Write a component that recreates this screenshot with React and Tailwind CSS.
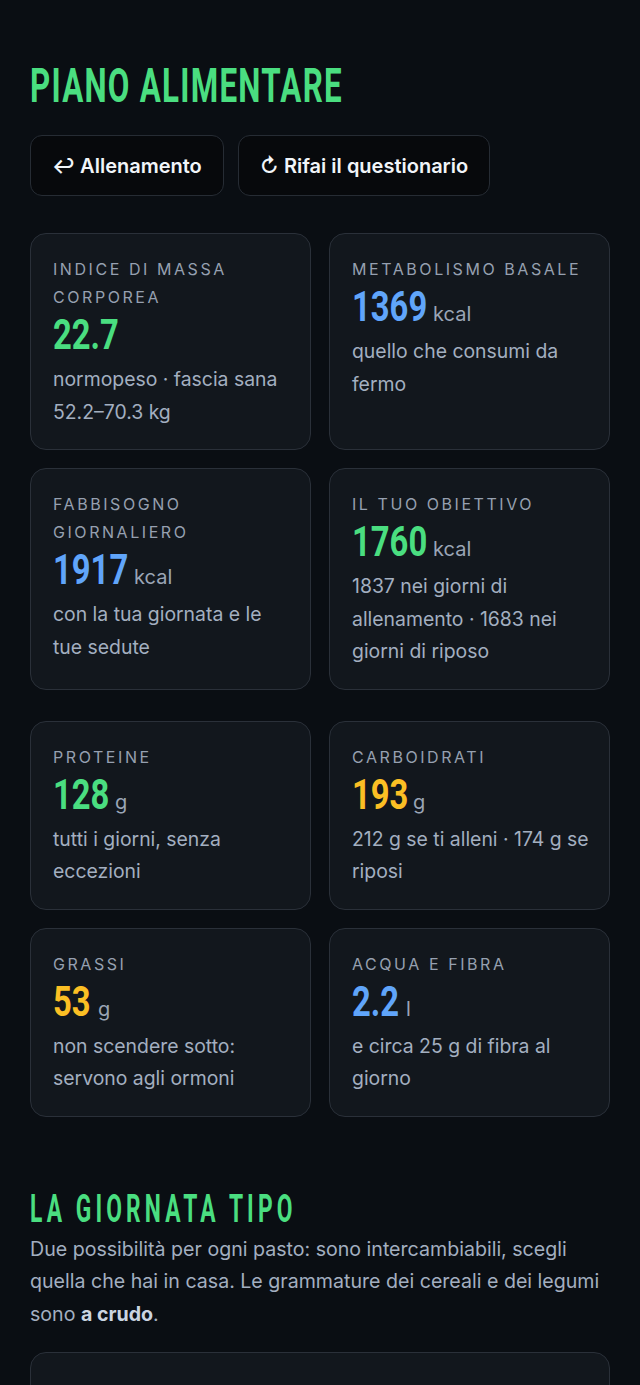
import React from "react";

// condensed display face: Roboto squeezed horizontally
const display = { fontFamily: '"Roboto", "Liberation Sans", sans-serif' };

const stats1 = [
  { label: "Indice di massa corporea", value: "22.7", unit: "", w: "w-[70px]", color: "text-[#4ade80]", desc: "normopeso · fascia sana 52.2–70.3 kg" },
  { label: "Metabolismo basale", value: "1369", unit: "kcal", w: "w-[81px]", color: "text-[#60a5fa]", desc: "quello che consumi da fermo" },
  { label: "Fabbisogno giornaliero", value: "1917", unit: "kcal", w: "w-[81px]", color: "text-[#60a5fa]", desc: "con la tua giornata e le tue sedute" },
  { label: "Il tuo obiettivo", value: "1760", unit: "kcal", w: "w-[81px]", color: "text-[#4ade80]", desc: "1837 nei giorni di allenamento · 1683 nei giorni di riposo" },
];

const stats2 = [
  { label: "Proteine", value: "128", unit: "g", w: "w-[62px]", color: "text-[#4ade80]", desc: "tutti i giorni, senza eccezioni" },
  { label: "Carboidrati", value: "193", unit: "g", w: "w-[61px]", color: "text-[#fbbf24]", desc: "212 g se ti alleni · 174 g se riposi" },
  { label: "Grassi", value: "53", unit: "g", w: "w-[45px]", color: "text-[#fbbf24]", desc: "non scendere sotto: servono agli ormoni" },
  { label: "Acqua e fibra", value: "2.2", unit: "l", w: "w-[54px]", color: "text-[#60a5fa]", desc: "e circa 25 g di fibra al giorno" },
];

function StatCard({ stat }) {
  return (
    <div className="rounded-2xl border border-[#2a3039] bg-[#12171d] py-[21px] pl-[22px] pr-[16px]">
      <div className="text-[16px] leading-[28px] uppercase tracking-[0.16em] text-[#96a0b0]">{stat.label}</div>
      <div className="flex h-[48px] items-baseline">
        <span className={`inline-block shrink-0 ${stat.w}`}>
          <span style={display} className={`inline-block origin-left scale-x-[0.78] whitespace-nowrap text-[42px] leading-[48px] font-bold ${stat.color}`}>
            {stat.value}
          </span>
        </span>
        {stat.unit && <span className="text-[20px] leading-none text-[#9aa5b6]">{stat.unit}</span>}
      </div>
      <p className="mt-[4px] text-[19.4px] leading-[32.5px] text-[#a3afc0]">{stat.desc}</p>
    </div>
  );
}

export default function App() {
  return (
    <div className="min-h-screen bg-[#0a0e13] px-[30px] pt-[60px] pb-10" style={{ fontFamily: '"Inter", "Noto Sans", sans-serif' }}>
      <h1 className="h-[52px] leading-[52px]">
        <span style={display} className="inline-block origin-left scale-x-[0.64] whitespace-nowrap text-[49px] font-bold tracking-[0.04em] text-[#4ade80]">
          PIANO ALIMENTARE
        </span>
      </h1>

      <div className="mt-[23px] flex gap-[14px]">
        <button className="h-[61px] rounded-xl border border-[#262c34] bg-[#07090c] px-[21px] text-[20px] font-semibold text-[#f1f5f9]">
          ↩ Allenamento
        </button>
        <button className="h-[61px] rounded-xl border border-[#262c34] bg-[#07090c] px-[21px] text-[20px] font-semibold text-[#f1f5f9]">
          ↻ Rifai il questionario
        </button>
      </div>

      <div className="mt-[37px] grid grid-cols-2 gap-[18px]">
        {stats1.map((s) => (
          <StatCard key={s.label} stat={s} />
        ))}
      </div>

      <div className="mt-[31px] grid grid-cols-2 gap-[18px]">
        {stats2.map((s) => (
          <StatCard key={s.label} stat={s} />
        ))}
      </div>

      <h2 className="mt-[72px] h-[40px] leading-[40px]">
        <span style={display} className="inline-block origin-left scale-x-[0.6] whitespace-nowrap text-[38px] font-bold tracking-[0.18em] text-[#4ade80]">
          LA GIORNATA TIPO
        </span>
      </h2>
      <p className="mt-[4px] text-[19.6px] leading-[32.5px] text-[#a3afc0]">
        Due possibilità per ogni pasto: sono intercambiabili, scegli quella che hai in casa. Le grammature dei cereali e dei legumi sono <strong className="font-bold text-[#cbd5e1]">a crudo</strong>.
      </p>

      <div className="mt-[22px] h-[200px] rounded-2xl border border-[#2a3039] bg-[#12171d]"></div>
    </div>
  );
}
